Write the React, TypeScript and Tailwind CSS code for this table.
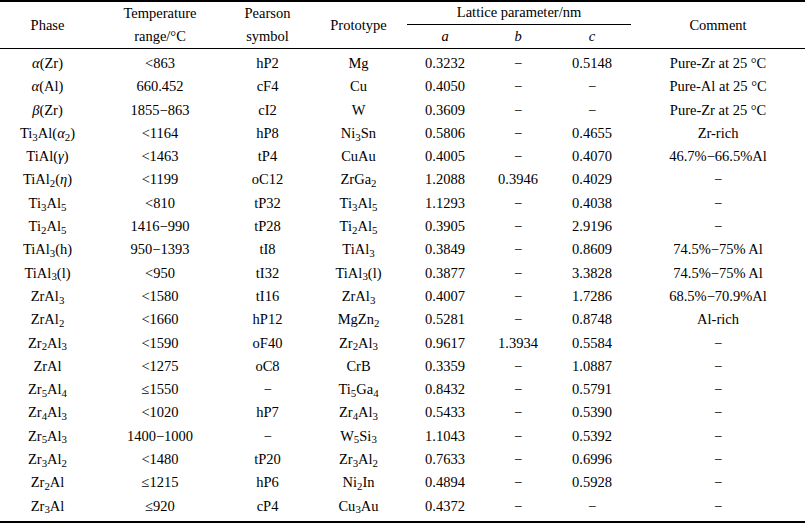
import React from 'react';

// markup: _x => subscript x, {x} => italic x
const chem = (s: string): React.ReactNode[] => {
  const out: React.ReactNode[] = [];
  let buf = '';
  let k = 0;
  for (let i = 0; i < s.length; i++) {
    const ch = s[i];
    if (ch === '_') {
      if (buf) out.push(buf);
      buf = '';
      out.push(<sub key={k++}>{s[i + 1]}</sub>);
      i++;
    } else if (ch === '{') {
      if (buf) out.push(buf);
      buf = '';
      const end = s.indexOf('}', i);
      out.push(<i key={k++}>{s.slice(i + 1, end)}</i>);
      i = end;
    } else {
      buf += ch;
    }
  }
  if (buf) out.push(buf);
  return out;
};

const D = '−';

const ROWS: string[][] = [
  ['{α}(Zr)', '<863', 'hP2', 'Mg', '0.3232', D, '0.5148', 'Pure-Zr at 25 °C'],
  ['{α}(Al)', '660.452', 'cF4', 'Cu', '0.4050', D, D, 'Pure-Al at 25 °C'],
  ['{β}(Zr)', '1855−863', 'cI2', 'W', '0.3609', D, D, 'Pure-Zr at 25 °C'],
  ['Ti_3Al({α}_2)', '<1164', 'hP8', 'Ni_3Sn', '0.5806', D, '0.4655', 'Zr-rich'],
  ['TiAl({γ})', '<1463', 'tP4', 'CuAu', '0.4005', D, '0.4070', '46.7%−66.5%Al'],
  ['TiAl_2({η})', '<1199', 'oC12', 'ZrGa_2', '1.2088', '0.3946', '0.4029', D],
  ['Ti_3Al_5', '<810', 'tP32', 'Ti_3Al_5', '1.1293', D, '0.4038', D],
  ['Ti_2Al_5', '1416−990', 'tP28', 'Ti_2Al_5', '0.3905', D, '2.9196', D],
  ['TiAl_3(h)', '950−1393', 'tI8', 'TiAl_3', '0.3849', D, '0.8609', '74.5%−75% Al'],
  ['TiAl_3(l)', '<950', 'tI32', 'TiAl_3(l)', '0.3877', D, '3.3828', '74.5%−75% Al'],
  ['ZrAl_3', '<1580', 'tI16', 'ZrAl_3', '0.4007', D, '1.7286', '68.5%−70.9%Al'],
  ['ZrAl_2', '<1660', 'hP12', 'MgZn_2', '0.5281', D, '0.8748', 'Al-rich'],
  ['Zr_2Al_3', '<1590', 'oF40', 'Zr_2Al_3', '0.9617', '1.3934', '0.5584', D],
  ['ZrAl', '<1275', 'oC8', 'CrB', '0.3359', D, '1.0887', D],
  ['Zr_5Al_4', '≤1550', D, 'Ti_5Ga_4', '0.8432', D, '0.5791', D],
  ['Zr_4Al_3', '<1020', 'hP7', 'Zr_4Al_3', '0.5433', D, '0.5390', D],
  ['Zr_5Al_3', '1400−1000', D, 'W_5Si_3', '1.1043', D, '0.5392', D],
  ['Zr_3Al_2', '<1480', 'tP20', 'Zr_3Al_2', '0.7633', D, '0.6996', D],
  ['Zr_2Al', '≤1215', 'hP6', 'Ni_2In', '0.4894', D, '0.5928', D],
  ['Zr_3Al', '≤920', 'cP4', 'Cu_3Au', '0.4372', D, D, D],
];

export default function App() {
  return (
    <div className="w-[805px] h-[525px] bg-white text-black font-['Liberation_Serif',serif] text-[14.5px]">
      <table className="w-[805px] table-fixed border-separate border-spacing-0 border-t-[2.5px] border-b-2 border-black">
        <colgroup>
          <col className="w-[95px]" />
          <col className="w-[130px]" />
          <col className="w-[85px]" />
          <col className="w-[97px]" />
          <col className="w-[76px]" />
          <col className="w-[70px]" />
          <col className="w-[78px]" />
          <col className="w-[174px]" />
        </colgroup>
        <thead>
          <tr className="h-[22px]">
            <th rowSpan={2} className="font-normal border-b border-black leading-[23px] align-middle">Phase</th>
            <th rowSpan={2} className="font-normal border-b border-black leading-[23px] align-middle">
              Temperature
              <br />
              range/°C
            </th>
            <th rowSpan={2} className="font-normal border-b border-black leading-[23px] align-middle">
              Pearson
              <br />
              symbol
            </th>
            <th rowSpan={2} className="font-normal border-b border-black leading-[23px] align-middle">Prototype</th>
            <th colSpan={3} className="font-normal border-b border-black leading-[21px] align-middle">
              Lattice parameter/nm
            </th>
            <th rowSpan={2} className="font-normal border-b border-black leading-[23px] align-middle">Comment</th>
          </tr>
          <tr className="h-[23px]">
            <th className="font-normal italic border-b border-black leading-[22px]">a</th>
            <th className="font-normal italic border-b border-black leading-[22px]">b</th>
            <th className="font-normal italic border-b border-black leading-[22px]">c</th>
          </tr>
        </thead>
        <tbody>
          {ROWS.map((r, ri) => (
            <tr key={ri} className="h-[23.3px]">
              {r.map((c, ci) => (
                <td
                  key={ci}
                  className={`p-0 text-center whitespace-nowrap align-middle leading-[23.3px] ${
                    ri === 0 ? 'pt-[3px]' : ''
                  } ${ri === ROWS.length - 1 ? 'pb-[3px]' : ''}`}
                >
                  {chem(c)}
                </td>
              ))}
            </tr>
          ))}
        </tbody>
      </table>
    </div>
  );
}
